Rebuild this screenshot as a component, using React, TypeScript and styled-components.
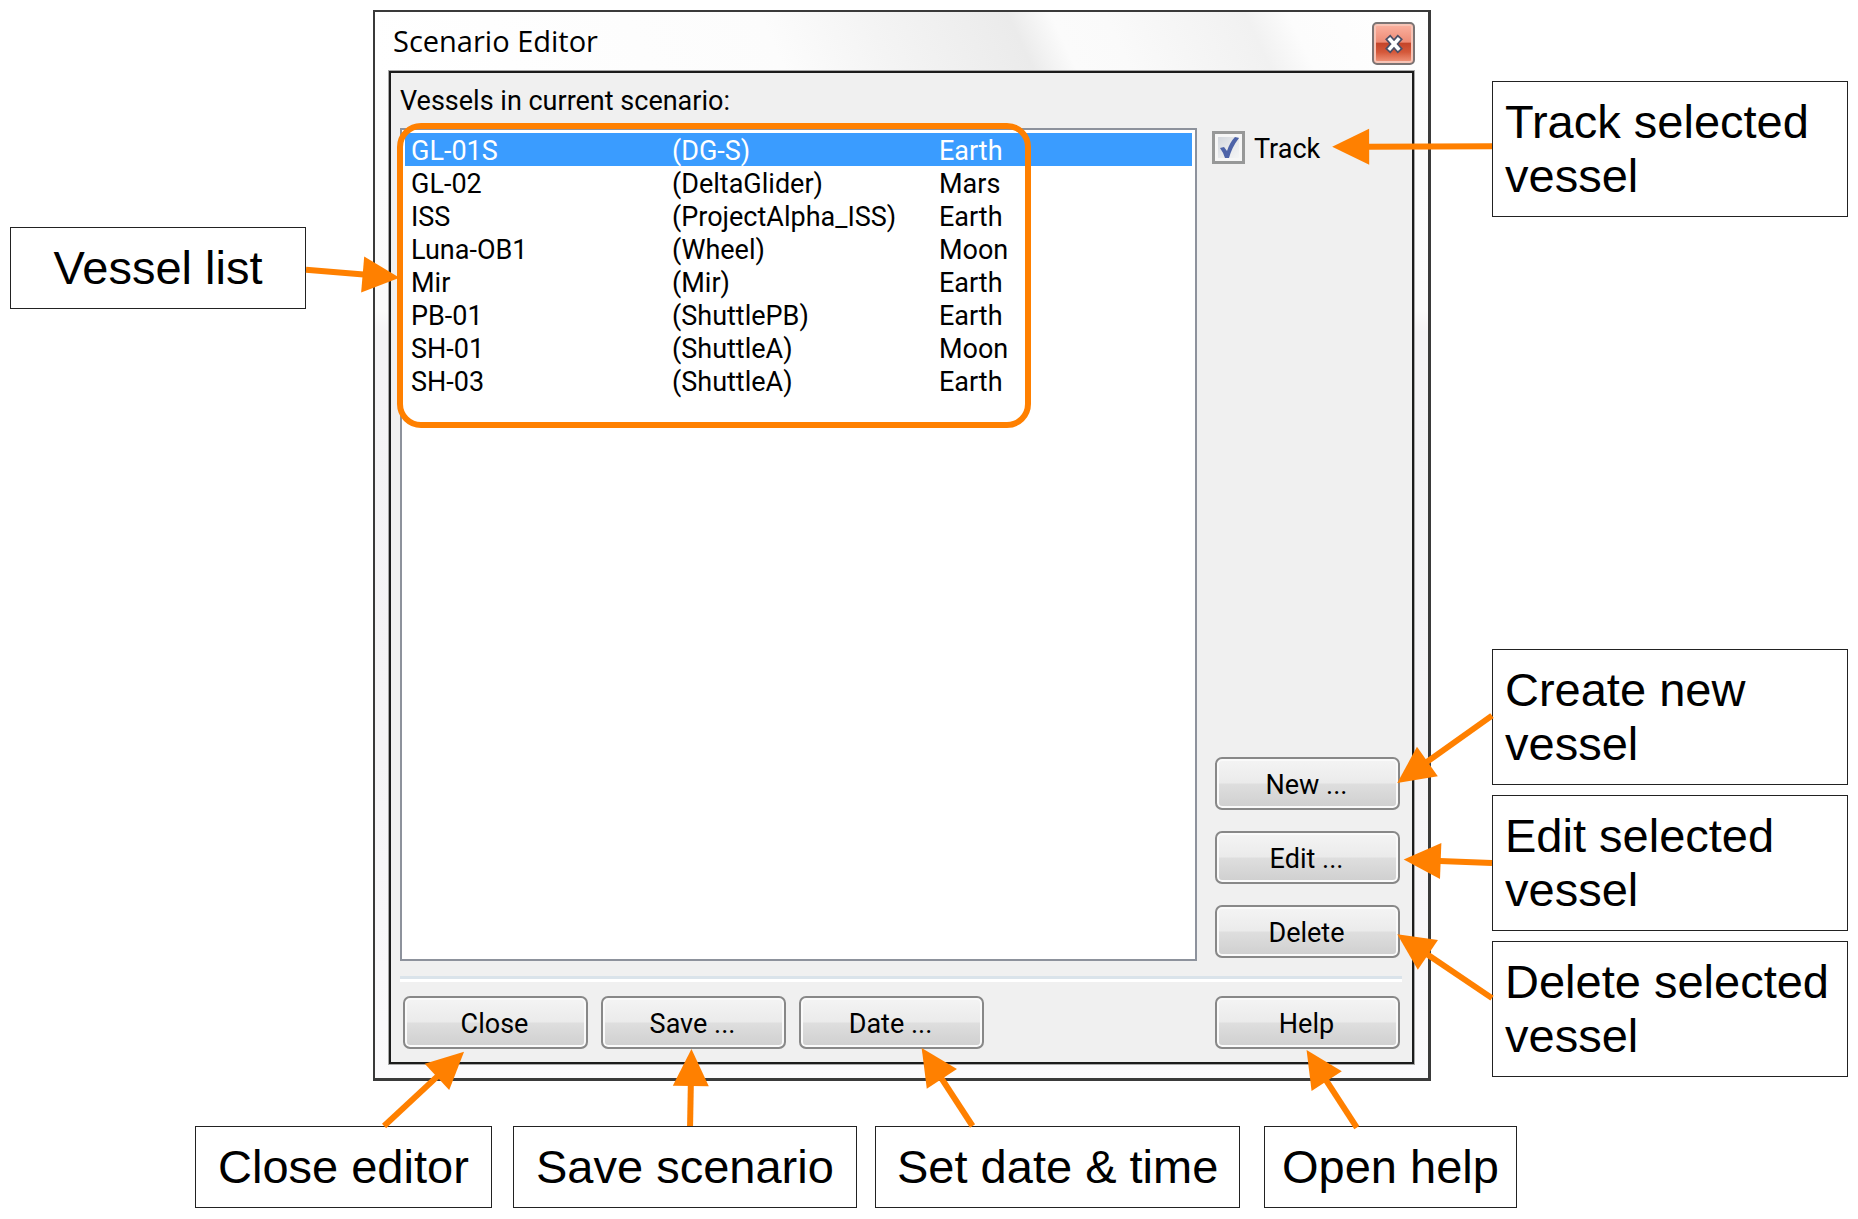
import React, { useLayoutEffect, useRef, useState } from 'react';
import styled, { createGlobalStyle } from 'styled-components';

const ORANGE = '#ff8000';

const GlobalStyle = createGlobalStyle`
  *, *::before, *::after { box-sizing: border-box; }
  body { margin: 0; background: #fff; color: #000; }
`;

const Figure = styled.main`
  position: relative;
  padding: 10px;
  min-width: 1500px;
  font-family: 'Liberation Sans', Arial, sans-serif;
`;

const Upper = styled.div`
  display: grid;
  grid-template-columns: 296px minmax(0, 1fr) 356px;
`;

const LeftNotes = styled.div`
  padding-top: 217px;
`;

const RightNotes = styled.div`
  display: flex;
  flex-direction: column;
  justify-content: space-between;
  padding: 71px 0 4px;
`;

const NoteStack = styled.div`
  display: grid;
  gap: 10px;
`;

const LowerNotes = styled.div`
  display: grid;
  grid-template-columns: 300px 344px 371px auto;
  column-gap: 18px;
  justify-items: start;
  margin-top: 45px;
  padding-left: 185px;
`;

const Note = styled.div<{ $pad?: number; $center?: boolean }>`
  padding: 13px ${(p) => p.$pad ?? 12}px;
  border: 1px solid #222;
  background: #fff;
  font-size: 47px;
  line-height: 54px;
  text-align: ${(p) => (p.$center ? 'center' : 'left')};
`;

const Window = styled.section`
  margin: 0 61px 0 67px;
  padding: 0 13px 13px;
  border: solid #3a3a3a;
  border-width: 2px 3px 3px 2px;
  background: linear-gradient(180deg, #fdfdfd 0%, #fbfbfb 28%, #f4f3f5 30%, #f5f4f6 70%, #fbfafc 100%);
  font-family: Roboto, 'Liberation Sans', sans-serif;
  font-size: 27px;
  line-height: 32px;
`;

const TitleBar = styled.header`
  display: flex;
  align-items: flex-start;
  justify-content: space-between;
  height: 58px;
  margin: 0 -13px;
  padding: 10px 13px 0 18px;
  background: linear-gradient(65deg, #fff 0%, #fcfcfc 38%, #f4f4f4 48%, #ebebeb 61%, #fbfbfb 65%, #fafafa 70%, #f1f1f1 83%, #fcfcfc 87%, #fff 100%);
`;

const Title = styled.h1`
  margin: 0;
  font-family: 'Open Sans', 'Noto Sans', sans-serif;
  font-size: 29px;
  font-weight: 400;
  line-height: 38px;
`;

const CloseBox = styled.button`
  display: grid;
  place-items: center;
  width: 43px;
  height: 43px;
  padding: 0;
  border: 2px solid #7b7474;
  border-radius: 5px;
  background: linear-gradient(180deg, #fbb3a2 0%, #ee8c76 46%, #c4452a 50%, #d4583a 72%, #f39a80 100%);
  box-shadow: inset 0 0 0 2px #f7c4b6;
`;

const Client = styled.div`
  margin: 1px;
  padding: 12px 10px 13px 9px;
  border: 2px solid #1c1c1c;
  outline: 1px solid #a8a8a8;
  background: #f0f0f0;
`;

const ListLabel = styled.h2`
  margin: 0 0 11px;
  font: inherit;
`;

const Content = styled.div`
  display: grid;
  grid-template-columns: minmax(0, 1fr) 190px;
  column-gap: 15px;
`;

const ListBox = styled.div`
  position: relative;
  min-height: 833px;
  padding: 3px;
  border: 2px solid #8d929c;
  background: #fff;
`;

const Highlight = styled.div`
  position: absolute;
  left: -5px;
  top: -7px;
  width: 634px;
  height: 305px;
  border: 6px solid ${ORANGE};
  border-radius: 24px;
  pointer-events: none;
`;

const VesselTable = styled.table`
  width: 100%;
  table-layout: fixed;
  border-collapse: collapse;
`;

const NameCol = styled.col`
  width: 261px;
`;

const TypeCol = styled.col`
  width: 267px;
`;

const VesselRow = styled.tr<{ $selected: boolean }>`
  background: ${(p) => (p.$selected ? '#3a9cff' : 'transparent')};
  color: ${(p) => (p.$selected ? '#fff' : '#000')};
  cursor: default;
`;

const VesselCell = styled.td`
  padding: 4px 0 0 6px;
  line-height: 29px;
  white-space: nowrap;
`;

const Side = styled.div`
  display: flex;
  flex-direction: column;
  align-items: flex-start;
  justify-content: space-between;
  padding: 3px 0;
`;

const TrackLabel = styled.label`
  display: flex;
  align-items: center;
  gap: 9px;
`;

const TrackText = styled.span`
  padding-top: 4px;
  line-height: 29px;
`;

const TickBox = styled.span`
  display: grid;
  width: 33px;
  height: 33px;
  > * { grid-area: 1 / 1; }
`;

const TickInput = styled.input`
  appearance: none;
  width: 33px;
  height: 33px;
  margin: 0;
  border: 3px solid #979898;
  background: linear-gradient(135deg, #cdd2d9 0%, #e6e8eb 50%, #f8f8f8 100%);
  box-shadow: inset 0 0 0 3px #f6f6f6;
  &:not(:checked) + svg { visibility: hidden; }
`;

const TickMark = styled.svg`
  width: 33px;
  height: 33px;
  pointer-events: none;
`;

const ButtonStack = styled.div`
  display: grid;
  gap: 21px;
  padding-left: 3px;
`;

const PushButton = styled.button`
  width: 185px;
  height: 53px;
  padding: 3px 2px 0 0;
  border: 2px solid #888;
  border-radius: 7px;
  background: linear-gradient(180deg, #f4f4f4 0%, #ebebeb 48%, #dedede 52%, #cfcfcf 100%);
  box-shadow: inset 0 0 0 2px #fafafa;
  color: #000;
  font: inherit;
`;

const Divider = styled.hr`
  height: 6px;
  margin: 15px 0 14px;
  border: solid;
  border-width: 3px 0;
  border-color: #dae3ea transparent #fff;
  background: #fff;
`;

const Footer = styled.footer`
  display: flex;
  gap: 13px;
  padding: 0 2px 0 3px;
  > :last-child { margin-left: auto; }
`;

const ArrowLayer = styled.svg`
  position: absolute;
  inset: 0;
  width: 100%;
  height: 100%;
  pointer-events: none;
`;

const vessels = [
  ['GL-01S', '(DG-S)', 'Earth'],
  ['GL-02', '(DeltaGlider)', 'Mars'],
  ['ISS', '(ProjectAlpha_ISS)', 'Earth'],
  ['Luna-OB1', '(Wheel)', 'Moon'],
  ['Mir', '(Mir)', 'Earth'],
  ['PB-01', '(ShuttlePB)', 'Earth'],
  ['SH-01', '(ShuttleA)', 'Moon'],
  ['SH-03', '(ShuttleA)', 'Earth'],
];

type Anchor = [id: string, fx: number, fy: number];

// Each arrow runs from a note to a control; anchors are fractions of the element's box.
const links: { from: Anchor; to: Anchor }[] = [
  { from: ['note-list', 1, 0.52], to: ['list', 0.004, 0.507] },
  { from: ['note-track', 0, 0.48], to: ['track', 1.11, 0.48] },
  { from: ['note-new', 0, 0.49], to: ['new', 0.985, 0.49] },
  { from: ['note-edit', 0, 0.5], to: ['edit', 1.02, 0.54] },
  { from: ['note-delete', 0, 0.42], to: ['delete', 0.985, 0.55] },
  { from: ['note-close', 0.637, 0], to: ['close', 0.33, 1.05] },
  { from: ['note-save', 0.515, 0], to: ['save', 0.489, 1] },
  { from: ['note-date', 0.267, 0], to: ['date', 0.663, 0.98] },
  { from: ['note-help', 0.367, 0.02], to: ['help', 0.495, 1.02] },
];

interface Line { x1: number; y1: number; x2: number; y2: number }

function Arrow({ x1, y1, x2, y2 }: Line) {
  const length = Math.hypot(x2 - x1, y2 - y1);
  const ux = (x2 - x1) / length;
  const uy = (y2 - y1) / length;
  const bx = x2 - ux * 37;
  const by = y2 - uy * 37;
  const head = `${x2},${y2} ${bx - uy * 18},${by + ux * 18} ${bx + uy * 18},${by - ux * 18}`;
  return (
    <g>
      <line x1={x1} y1={y1} x2={bx + ux} y2={by + uy} stroke={ORANGE} strokeWidth={6} />
      <polygon points={head} fill={ORANGE} />
    </g>
  );
}

export default function App() {
  const figure = useRef<HTMLElement>(null);
  const [lines, setLines] = useState<Line[]>([]);
  const [selected, setSelected] = useState(0);

  useLayoutEffect(() => {
    const root = figure.current;
    if (!root) return;
    const measure = () => {
      const base = root.getBoundingClientRect();
      const point = ([id, fx, fy]: Anchor) => {
        const box = root.querySelector(`[data-anchor="${id}"]`)!.getBoundingClientRect();
        return [box.left - base.left + fx * box.width, box.top - base.top + fy * box.height];
      };
      setLines(
        links.map(({ from, to }) => {
          const [x1, y1] = point(from);
          const [x2, y2] = point(to);
          return { x1, y1, x2, y2 };
        }),
      );
    };
    measure();
    const observer = new ResizeObserver(measure);
    observer.observe(root);
    return () => observer.disconnect();
  }, []);

  return (
    <>
      <GlobalStyle />
      <Figure ref={figure}>
        <Upper>
          <LeftNotes>
            <Note data-anchor="note-list" $center>Vessel list</Note>
          </LeftNotes>
          <Window>
            <TitleBar>
              <Title>Scenario Editor</Title>
              <CloseBox type="button" aria-label="Close window">
                <svg width="20" height="20" viewBox="0 0 20 20">
                  <path d="M6 5.5 L14 14.5 M14 5.5 L6 14.5" stroke="#4b5067" strokeWidth="7" strokeLinecap="square" />
                  <path d="M6 5.5 L14 14.5 M14 5.5 L6 14.5" stroke="#fff" strokeWidth="3.6" strokeLinecap="square" />
                </svg>
              </CloseBox>
            </TitleBar>
            <Client>
              <ListLabel id="vessels-label">Vessels in current scenario:</ListLabel>
              <Content>
                <ListBox>
                  <VesselTable aria-labelledby="vessels-label">
                    <colgroup>
                      <NameCol />
                      <TypeCol />
                      <col />
                    </colgroup>
                    <tbody>
                      {vessels.map((cells, row) => (
                        <VesselRow
                          key={cells[0]}
                          $selected={row === selected}
                          aria-selected={row === selected}
                          onClick={() => setSelected(row)}
                        >
                          {cells.map((cell, i) => (
                            <VesselCell key={i}>{cell}</VesselCell>
                          ))}
                        </VesselRow>
                      ))}
                    </tbody>
                  </VesselTable>
                  <Highlight data-anchor="list" />
                </ListBox>
                <Side>
                  <TrackLabel data-anchor="track">
                    <TickBox>
                      <TickInput type="checkbox" defaultChecked />
                      <TickMark viewBox="0 0 33 33">
                        <path d="M8 17 L12 16 L15 20 Q18 11 23 6 L27 7 Q20 16 17 27 L13 27 Q11 21 8 17 Z" fill="#4d63a8" />
                      </TickMark>
                    </TickBox>
                    <TrackText>Track</TrackText>
                  </TrackLabel>
                  <ButtonStack>
                    <PushButton type="button" data-anchor="new">New ...</PushButton>
                    <PushButton type="button" data-anchor="edit">Edit ...</PushButton>
                    <PushButton type="button" data-anchor="delete">Delete</PushButton>
                  </ButtonStack>
                </Side>
              </Content>
              <Divider />
              <Footer>
                <PushButton type="button" data-anchor="close">Close</PushButton>
                <PushButton type="button" data-anchor="save">Save ...</PushButton>
                <PushButton type="button" data-anchor="date">Date ...</PushButton>
                <PushButton type="button" data-anchor="help">Help</PushButton>
              </Footer>
            </Client>
          </Window>
          <RightNotes>
            <Note data-anchor="note-track">Track selected vessel</Note>
            <NoteStack>
              <Note data-anchor="note-new">Create new vessel</Note>
              <Note data-anchor="note-edit">Edit selected vessel</Note>
              <Note data-anchor="note-delete">Delete selected vessel</Note>
            </NoteStack>
          </RightNotes>
        </Upper>
        <LowerNotes>
          <Note data-anchor="note-close" $pad={22}>Close editor</Note>
          <Note data-anchor="note-save" $pad={22}>Save scenario</Note>
          <Note data-anchor="note-date" $pad={21}>Set date &amp; time</Note>
          <Note data-anchor="note-help" $pad={17}>Open help</Note>
        </LowerNotes>
        <ArrowLayer aria-hidden="true">
          {lines.map((line, i) => (
            <Arrow key={i} {...line} />
          ))}
        </ArrowLayer>
      </Figure>
    </>
  );
}
